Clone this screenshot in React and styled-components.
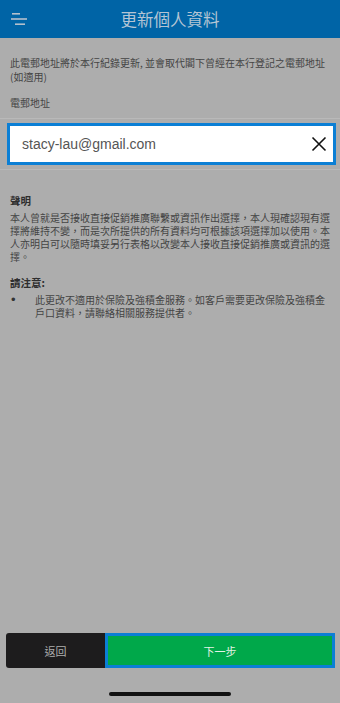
import styled, { createGlobalStyle } from "styled-components";

const GlobalStyle = createGlobalStyle`
  html, body {
    margin: 0;
    padding: 0;
    background: #adadad;
  }
  * {
    box-sizing: border-box;
  }
`;

const Page = styled.div`
  width: 340px;
  height: 703px;
  display: flex;
  flex-direction: column;
  background: #adadad;
  font-family: "Liberation Sans", "Noto Sans CJK TC", sans-serif;
  color: #404040;
  overflow: hidden;
`;

const Header = styled.header`
  height: 38px;
  display: grid;
  grid-template-columns: 40px 1fr 40px;
  align-items: center;
  background: #0064a6;
`;

const MenuButton = styled.div`
  display: flex;
  align-items: center;
  padding-left: 11px;
  height: 100%;
`;

const Title = styled.h1`
  margin: 0;
  text-align: center;
  font-size: 16.5px;
  font-weight: 400;
  color: #b4c4d4;
  font-family: "Noto Sans CJK TC", sans-serif;
`;

const Content = styled.main`
  display: flex;
  flex-direction: column;
  font-family: "Noto Sans CJK TC", sans-serif;
`;

const Intro = styled.p`
  margin: 18px 0 0;
  padding: 0 10px;
  font-size: 10px;
  line-height: 13.5px;
  color: #444;
`;

const Label = styled.div`
  margin-top: 13px;
  padding: 0 10px;
  font-size: 10px;
  line-height: 14px;
  color: #444;
`;

const FieldRow = styled.div`
  margin-top: 8px;
  padding: 4px 4px 4px 7px;
  border-top: 1px solid #b9b9b9;
  border-bottom: 1px solid #b9b9b9;
`;

const Field = styled.div`
  height: 42px;
  display: flex;
  align-items: center;
  justify-content: space-between;
  background: #fff;
  border: 3px solid #0b7fd5;
  padding: 0 6px 0 12px;
`;

const EmailText = styled.span`
  font-family: "Liberation Sans", Arial, sans-serif;
  font-size: 14px;
  color: #555;
  padding-bottom: 1px;
`;

const Section = styled.section`
  margin-top: ${(p) => p.$top}px;
  padding: 0 8px 0 10px;
`;

const SectionTitle = styled.div`
  font-size: 10.5px;
  font-weight: 700;
  line-height: 14px;
  color: #2e2e2e;
`;

const Paragraph = styled.p`
  margin: 3px 0 0;
  font-size: 10px;
  line-height: 13px;
  color: #444;
`;

const BulletItem = styled.div`
  display: flex;
  margin-top: 3px;
`;

const Bullet = styled.span`
  width: 25px;
  flex: none;
  padding-left: 1px;
  font-family: "Liberation Sans", sans-serif;
  font-size: 13px;
  line-height: 13px;
  color: #333;
`;

const BulletText = styled.span`
  width: 292px;
  font-size: 10px;
  line-height: 13px;
  color: #444;
`;

const Spacer = styled.div`
  flex: 1;
`;

const Footer = styled.footer`
  display: flex;
  padding: 0 5px 0 6px;
  height: 35px;
`;

const BackButton = styled.button`
  width: 99px;
  border: none;
  border-radius: 3px 0 0 3px;
  background: #1d1c1d;
  color: #aeaeae;
  font-family: "Noto Sans CJK TC", sans-serif;
  font-size: 11px;
  padding: 0;
`;

const NextButton = styled.button`
  flex: 1;
  border: 3px solid #0b7fd5;
  background: #00a84a;
  color: #e4f2e6;
  font-family: "Noto Sans CJK TC", sans-serif;
  font-size: 11px;
  padding: 0;
`;

const HomeBar = styled.div`
  width: 122px;
  height: 4px;
  margin: 24px auto 7px;
  border-radius: 2px;
  background: #111;
`;

const MenuIcon = () => (
  <svg width="17" height="14" viewBox="0 0 17 14">
    <rect x="1" y="1" width="8" height="1.6" fill="#b4c0cc" />
    <rect x="0" y="6.2" width="16" height="1.6" fill="#b4c0cc" />
    <rect x="4" y="11.4" width="10" height="1.6" fill="#b4c0cc" />
  </svg>
);

const CloseIcon = () => (
  <svg width="16" height="16" viewBox="0 0 16 16">
    <path d="M1.5 1.5 L14.5 14.5 M14.5 1.5 L1.5 14.5" stroke="#111" strokeWidth="1.6" />
  </svg>
);

export default function App() {
  return (
    <>
      <GlobalStyle />
      <Page>
        <Header>
          <MenuButton>
            <MenuIcon />
          </MenuButton>
          <Title>更新個人資料</Title>
          <div />
        </Header>
        <Content>
          <Intro>
            此電郵地址將於本行紀錄更新, 並會取代閣下曾經在本行登記之電郵地址
            <br />
            (如適用)
          </Intro>
          <Label>電郵地址</Label>
          <FieldRow>
            <Field>
              <EmailText>stacy-lau@gmail.com</EmailText>
              <CloseIcon />
            </Field>
          </FieldRow>
          <Section $top={24}>
            <SectionTitle>聲明</SectionTitle>
            <Paragraph>
              本人曾就是否接收直接促銷推廣聯繫或資訊作出選擇，本人現確認現有選擇將維持不變，而是次所提供的所有資料均可根據該項選擇加以使用。本人亦明白可以隨時填妥另行表格以改變本人接收直接促銷推廣或資訊的選擇。
            </Paragraph>
          </Section>
          <Section $top={13}>
            <SectionTitle>請注意:</SectionTitle>
            <BulletItem>
              <Bullet>•</Bullet>
              <BulletText>
                此更改不適用於保險及強積金服務。如客戶需要更改保險及強積金戶口資料，請聯絡相關服務提供者。
              </BulletText>
            </BulletItem>
          </Section>
        </Content>
        <Spacer />
        <Footer>
          <BackButton>返回</BackButton>
          <NextButton>下一步</NextButton>
        </Footer>
        <HomeBar />
      </Page>
    </>
  );
}
